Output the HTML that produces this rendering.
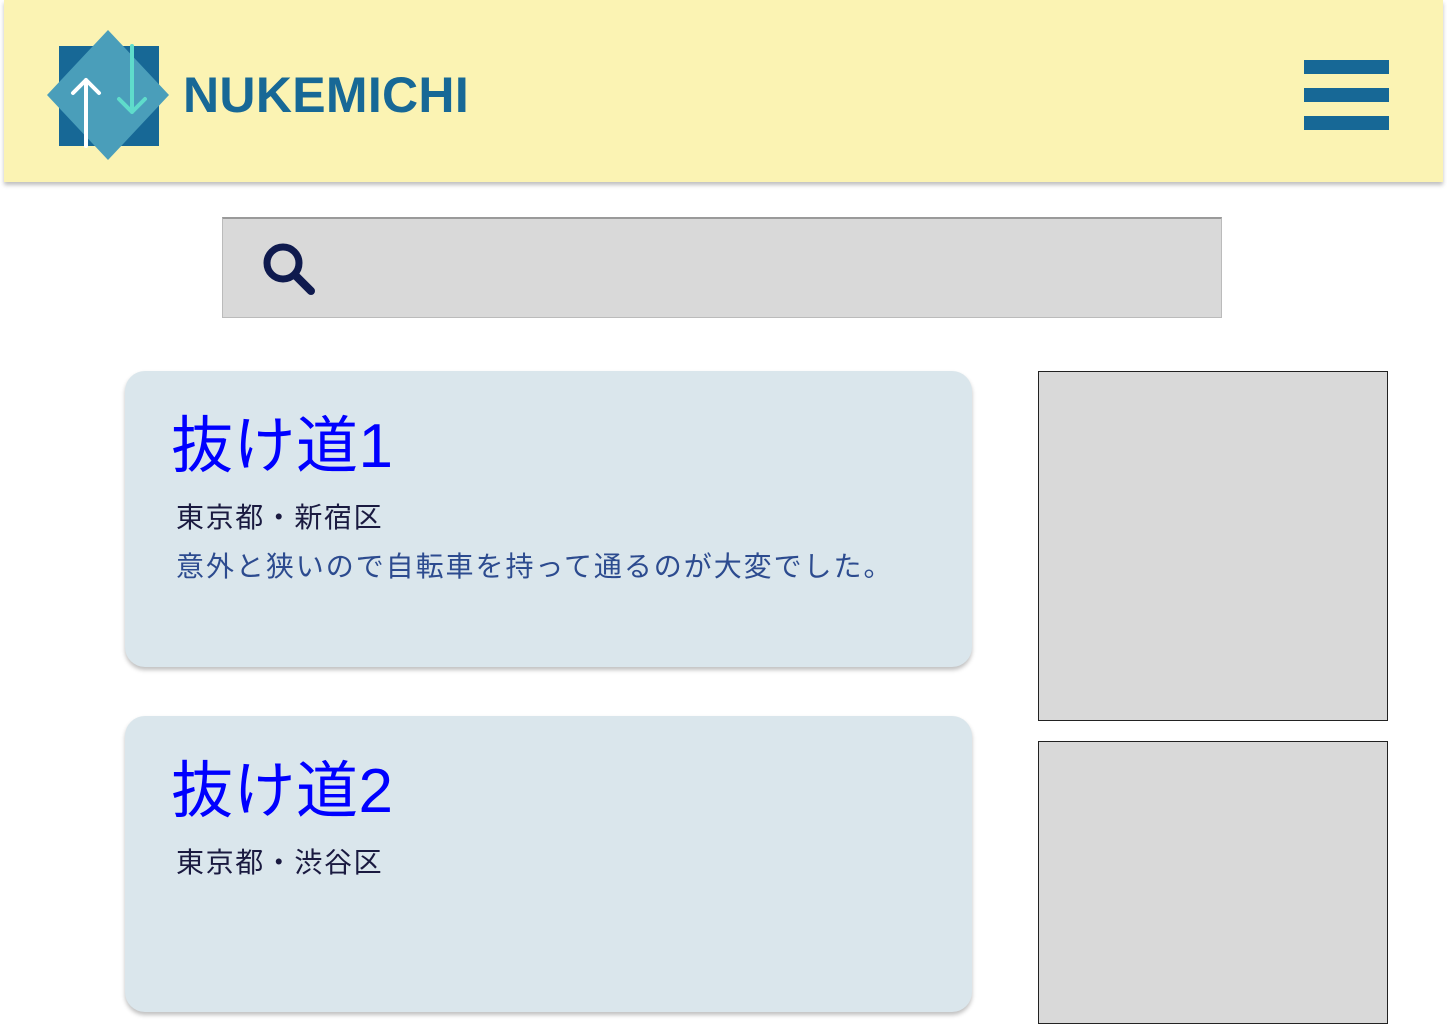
<!DOCTYPE html>
<html><head><meta charset="utf-8"><style>
body{margin:0;width:1447px;height:1024px;overflow:hidden;background:#fff;font-family:"Liberation Sans","Noto Sans CJK JP",sans-serif;position:relative}
.hdr{position:absolute;left:4px;top:0;width:1439px;height:182px;background:#fbf3b3;box-shadow:0 3px 4px rgba(0,0,0,.25)}
.brand{position:absolute;left:179px;top:66px;font-size:50px;font-weight:bold;color:#176896;letter-spacing:0.3px}
.bar{position:absolute;left:1304px;width:85px;height:14px;background:#176896}
.search{position:absolute;left:222px;top:217px;width:998px;height:98px;background:#d9d9d9;border:1px solid #bbb;border-top:2px solid #9a9a9a}
.card{position:absolute;left:125px;width:847px;height:296px;background:#dae6ec;border-radius:20px;box-shadow:0 3px 4px rgba(0,0,0,.25)}
.t{position:absolute;left:46px;top:45px;font-size:62px;color:#0000ff;line-height:1;letter-spacing:0.5px}
.a{position:absolute;left:51px;font-size:28px;letter-spacing:1.6px;color:#1a1a40;line-height:1}
.d{position:absolute;left:51px;top:182px;font-size:28px;letter-spacing:1.95px;color:#2c4b8f;line-height:1}
.img{position:absolute;left:1038px;width:348px;background:#d9d9d9;border:1px solid #222}
</style></head><body>
<div class="hdr">
<svg style="position:absolute;left:0;top:0" width="200" height="182">
<rect x="55" y="46" width="100" height="100" fill="#176896"/>
<polygon points="104,30 165,95 104,160 43,95" fill="#4a9eba"/>
<path d="M82 146V80M69 93L82 80L95 93" stroke="#fff" stroke-width="4" fill="none" stroke-linecap="round" stroke-linejoin="round"/>
<path d="M128 46V112M115 99L128 112L141 99" stroke="#5fdccb" stroke-width="4" fill="none" stroke-linecap="round" stroke-linejoin="round"/>
</svg>
<div class="brand">NUKEMICHI</div>
</div>
<div class="bar" style="top:60px"></div><div class="bar" style="top:88px"></div><div class="bar" style="top:116px"></div>
<div class="search"><svg style="position:absolute;left:36px;top:20px" width="60" height="60"><circle cx="24" cy="24" r="16" stroke="#0f1a4e" stroke-width="7" fill="none"/><path d="M36 36L52 52" stroke="#0f1a4e" stroke-width="8" stroke-linecap="round"/></svg></div>
<div class="card" style="top:371px"><div class="t">抜け道1</div><div class="a" style="top:133px">東京都・新宿区</div><div class="d">意外と狭いので自転車を持って通るのが大変でした。</div></div>
<div class="card" style="top:716px"><div class="t">抜け道2</div><div class="a" style="top:133px">東京都・渋谷区</div></div>
<div class="img" style="top:371px;height:348px"></div>
<div class="img" style="top:741px;height:281px"></div>
</body></html>
